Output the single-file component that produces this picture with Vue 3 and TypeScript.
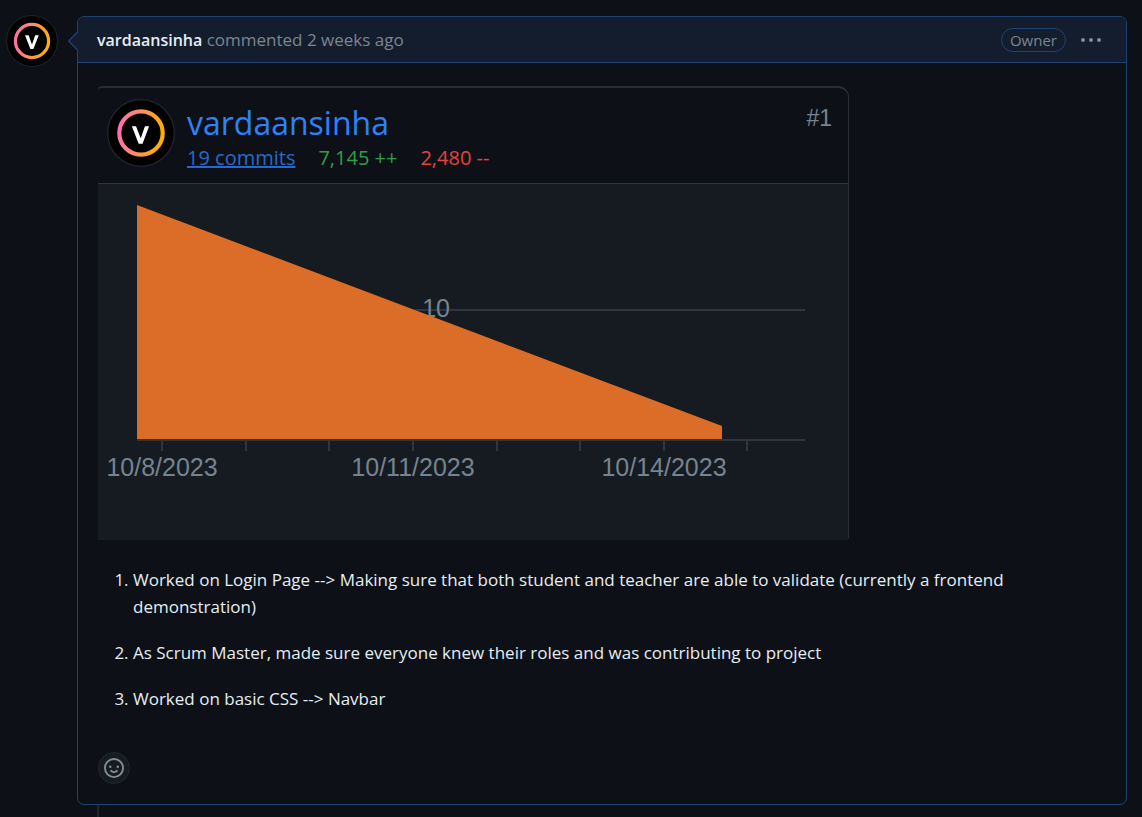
<script setup lang="ts">
interface Tick {
  x: number
  label?: string
}

const notes: string[] = [
  'Worked on Login Page --> Making sure that both student and teacher are able to validate (currently a frontend demonstration)',
  'As Scrum Master, made sure everyone knew their roles and was contributing to project',
  'Worked on basic CSS --> Navbar',
]

const ticks: Tick[] = [
  { x: 64, label: '10/8/2023' },
  { x: 148 },
  { x: 231 },
  { x: 315, label: '10/11/2023' },
  { x: 399 },
  { x: 482 },
  { x: 566, label: '10/14/2023' },
  { x: 649 },
]
</script>

<template>
  <main class="timeline">
    <a class="avatar-link" href="#" aria-label="vardaansinha profile">
      <svg class="avatar" viewBox="0 0 52 52" aria-hidden="true">
        <defs>
          <linearGradient id="ring-small" x1="0" y1="0.4" x2="1" y2="0.6">
            <stop offset="0" stop-color="#ff6fae" />
            <stop offset="0.6" stop-color="#ff9a3c" />
            <stop offset="1" stop-color="#ffb000" />
          </linearGradient>
        </defs>
        <circle cx="26" cy="26" r="25.5" fill="#000" stroke="#22262c" />
        <circle cx="26" cy="26" r="16.6" fill="none" stroke="url(#ring-small)" stroke-width="3.2" />
        <path d="M19 20.2H22.6L26 29.4L29.2 20.2H32.8L27.4 34H24.4Z" fill="#fff" />
      </svg>
    </a>

    <div class="comment-column">
      <article class="comment">
        <svg class="caret" viewBox="0 0 10 20" aria-hidden="true">
          <path d="M10 0.5L0.7 10L10 19.5Z" fill="#131d2e" />
          <path d="M9.5 1L0.7 10L9.5 19" fill="none" stroke="#1f4275" stroke-width="1.4" />
        </svg>
        <header class="comment-header">
          <p class="byline">
            <a class="author" href="#">vardaansinha</a> commented <a class="when" href="#">2 weeks ago</a>
          </p>
          <span class="badge">Owner</span>
          <button class="menu" type="button" aria-label="Show options">
            <svg viewBox="0 0 22 6" aria-hidden="true">
              <circle cx="3" cy="3" r="2" />
              <circle cx="11" cy="3" r="2" />
              <circle cx="19" cy="3" r="2" />
            </svg>
          </button>
        </header>

        <div class="comment-body">
          <section class="card">
            <div class="card-header">
              <svg class="card-avatar" viewBox="0 0 52 52" aria-hidden="true">
                <defs>
                  <linearGradient id="ring-large" x1="0" y1="0.4" x2="1" y2="0.6">
                    <stop offset="0" stop-color="#ff6fae" />
                    <stop offset="0.6" stop-color="#ff9a3c" />
                    <stop offset="1" stop-color="#ffb000" />
                  </linearGradient>
                </defs>
                <circle cx="26" cy="26" r="25.5" fill="#000" stroke="#22262c" />
                <circle cx="26" cy="26" r="16.6" fill="none" stroke="url(#ring-large)" stroke-width="3.2" />
                <path d="M19 20.8H22.2L25.8 30L29 20.8H32.2L27.2 34.2H24.2Z" fill="#fff" />
              </svg>
              <div class="contributor">
                <a class="name" href="#">vardaansinha</a>
                <div class="stats">
                  <a class="commits" href="#">19 commits</a>
                  <span class="added">7,145 ++</span>
                  <span class="removed">2,480 --</span>
                </div>
              </div>
              <span class="rank">#1</span>
            </div>
            <svg class="chart" viewBox="0 0 750 356" role="img" aria-label="Commits over time">
              <rect x="317" y="125" width="390" height="2" class="rule" />
              <text x="352" y="133" text-anchor="end">10</text>
              <polygon points="39,21 624,242 624,255 39,255" fill="#db6d28" />
              <rect x="39" y="255" width="668" height="2" class="rule" />
              <g v-for="tick in ticks" :key="tick.x">
                <rect :x="tick.x - 1" y="257" width="2" height="10" class="rule" />
                <text v-if="tick.label" :x="tick.x" y="292" text-anchor="middle">{{ tick.label }}</text>
              </g>
            </svg>
          </section>

          <ol class="notes">
            <li v-for="note in notes" :key="note">{{ note }}</li>
          </ol>

          <button class="react" type="button" aria-label="Add reaction">
            <svg viewBox="0 0 16 16" aria-hidden="true">
              <path
                d="M8 0a8 8 0 1 1 0 16A8 8 0 0 1 8 0ZM1.5 8a6.5 6.5 0 1 0 13 0 6.5 6.5 0 0 0-13 0Zm3.82 1.636a.75.75 0 0 1 1.038.175l.007.009c.103.118.22.222.35.31.264.178.683.37 1.285.37.602 0 1.02-.192 1.285-.371.13-.088.247-.192.35-.31l.007-.008a.75.75 0 0 1 1.222.87l-.022-.015c.02.013.021.015.021.015v.001l-.001.002-.002.003-.005.007-.014.019a2.066 2.066 0 0 1-.184.213c-.16.166-.338.316-.53.445-.63.418-1.37.638-2.127.629-.946 0-1.652-.308-2.126-.63a3.331 3.331 0 0 1-.715-.657l-.014-.02-.005-.006-.002-.003v-.002h-.001l.613-.432-.614.43a.75.75 0 0 1 .183-1.044ZM12 7a1 1 0 1 1-2 0 1 1 0 0 1 2 0ZM5 8a1 1 0 1 1 0-2 1 1 0 0 1 0 2Z"
              />
            </svg>
          </button>
        </div>
      </article>
      <div class="thread-line"></div>
    </div>
  </main>
</template>

<style>
body {
  margin: 0;
  background: #0d1117;
}
</style>

<style scoped>
.timeline {
  display: flex;
  align-items: flex-start;
  gap: 19px;
  padding: 15px 15px 0 6px;
  min-height: 100vh;
  box-sizing: border-box;
  font-family: "Open Sans", "Noto Sans", sans-serif;
  font-size: 17px;
  line-height: 27px;
  color: #e6edf3;
}

a {
  color: inherit;
  text-decoration: none;
}

button {
  padding: 0;
  border: 0;
  background: none;
  color: #848d97;
}

svg {
  display: block;
}

.avatar {
  width: 52px;
  height: 52px;
}

.comment-column {
  flex: 1;
  min-width: 0;
  padding-top: 1px;
}

.comment {
  position: relative;
  border: 1px solid #1f4275;
  border-radius: 7px;
}

.caret {
  position: absolute;
  top: 14px;
  left: -10px;
  width: 10px;
  height: 20px;
}

.comment-header {
  display: flex;
  align-items: center;
  height: 45px;
  padding: 0 24px 0 19px;
  border-bottom: 1px solid #1f4275;
  border-radius: 6px 6px 0 0;
  background: #131d2e;
  color: #7d8590;
}

.byline {
  flex: 1;
  margin: 0;
}

.author {
  color: #e6edf3;
  font-size: 16px;
  font-weight: 600;
}

.badge {
  padding: 0 8px;
  border: 1px solid #1f4275;
  border-radius: 12px;
  font-size: 15px;
  line-height: 22px;
  font-weight: 500;
}

.menu {
  margin-left: 14px;
}

.menu svg {
  width: 22px;
  height: 6px;
  fill: currentColor;
}

.comment-body {
  padding: 23px 20px 20px;
}

.card {
  max-width: 750px;
  border: 1px solid #292e35;
  border-width: 2px 1px 0 0;
  border-radius: 4px 11px 3px 0;
  overflow: hidden;
}

.card-header {
  display: flex;
  align-items: flex-start;
  height: 95px;
  padding: 0 16px 0 9px;
  border-bottom: 1px solid #30363d;
}

.card-avatar {
  width: 68px;
  height: 68px;
  margin-top: 11px;
}

.contributor {
  flex: 1;
  padding: 13px 0 0 12px;
}

.name {
  display: block;
  font-size: 32px;
  line-height: 44px;
  color: #2f81f7;
}

.stats {
  display: flex;
  gap: 23px;
  font-size: 20px;
  line-height: 26px;
}

.commits {
  color: #2769cb;
  text-decoration: underline;
}

.added {
  color: #2ea043;
}

.removed {
  color: #e5443d;
}

.rank {
  padding-top: 13px;
  font-family: "Liberation Sans", Arial, sans-serif;
  font-size: 23px;
  line-height: 34px;
  color: #768390;
}

.chart {
  width: 100%;
  height: auto;
  background: #161b22;
  font-family: "Liberation Sans", Arial, sans-serif;
  font-size: 25px;
}

.chart text {
  fill: #768390;
}

.rule {
  fill: #30363d;
}

.notes {
  margin: 26px 0 0;
  padding-left: 35px;
}

.notes li + li {
  margin-top: 19px;
}

.react {
  display: flex;
  align-items: center;
  justify-content: center;
  width: 32px;
  height: 32px;
  margin-top: 40px;
  border: 1px solid #22272e;
  border-radius: 50%;
  background: #161b22;
}

.react svg {
  width: 20px;
  height: 20px;
  fill: currentColor;
}

.thread-line {
  width: 2px;
  height: 12px;
  margin-left: 20px;
  background: #21262d;
}
</style>
